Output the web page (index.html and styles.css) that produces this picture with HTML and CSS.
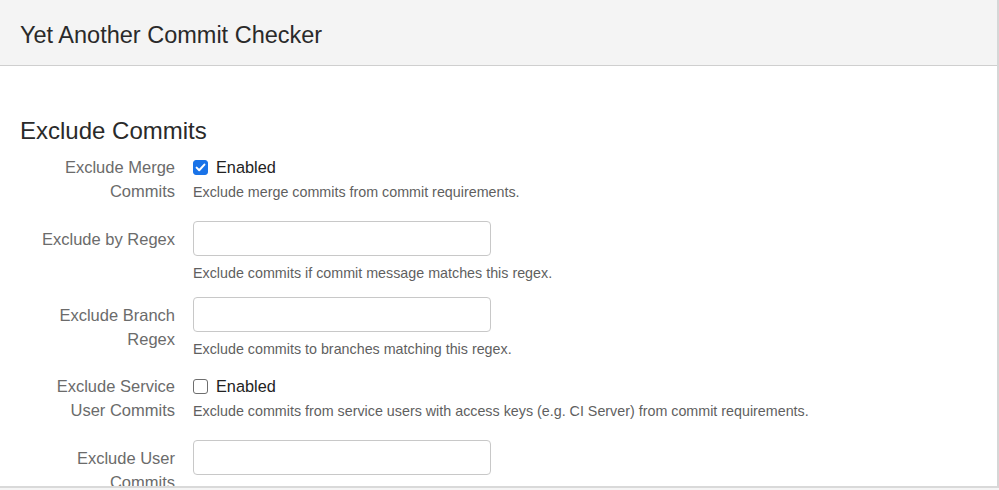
FILE: index.html
```html
<!DOCTYPE html>
<html lang="en">
<head>
<meta charset="utf-8">
<title>Yet Another Commit Checker</title>
<link rel="stylesheet" href="styles.css">
</head>
<body>
<div class="page">
  <header class="header">
    <h1 class="title">Yet Another Commit Checker</h1>
  </header>
  <main class="content">
    <h2 class="section-title">Exclude Commits</h2>

    <div class="field field-check">
      <label class="field-label">Exclude Merge Commits</label>
      <div class="field-body">
        <label class="check">
          <span class="box checked">
            <svg viewBox="0 0 15 15" width="15" height="15"><path d="M3.6 7.6 L6.2 10.2 L11.4 4.6" fill="none" stroke="#fff" stroke-width="2" stroke-linecap="round" stroke-linejoin="round"/></svg>
          </span>
          <span class="check-text">Enabled</span>
        </label>
        <div class="desc">Exclude merge commits from commit requirements.</div>
      </div>
    </div>

    <div class="field field-input">
      <label class="field-label">Exclude by Regex</label>
      <div class="field-body">
        <div class="text-input"></div>
        <div class="desc desc-input">Exclude commits if commit message matches this regex.</div>
      </div>
    </div>

    <div class="field field-input">
      <label class="field-label">Exclude Branch Regex</label>
      <div class="field-body">
        <div class="text-input"></div>
        <div class="desc desc-input">Exclude commits to branches matching this regex.</div>
      </div>
    </div>

    <div class="field field-check field-after-inputs">
      <label class="field-label">Exclude Service User Commits</label>
      <div class="field-body">
        <label class="check">
          <span class="box"></span>
          <span class="check-text">Enabled</span>
        </label>
        <div class="desc">Exclude commits from service users with access keys (e.g. CI Server) from commit requirements.</div>
      </div>
    </div>

    <div class="field field-input">
      <label class="field-label">Exclude User Commits</label>
      <div class="field-body">
        <div class="text-input"></div>
      </div>
    </div>
  </main>
</div>
</body>
</html>
```

FILE: styles.css
```css
* {
  box-sizing: border-box;
}

html, body {
  margin: 0;
  padding: 0;
}

body {
  background: #f5f5f5;
  font-family: "Liberation Sans", Arial, sans-serif;
  color: #333;
  height: 490px;
  overflow: hidden;
}

.page {
  width: 999px;
  height: 488px;
  background: #fff;
  border-right: 2px solid #d6d6d6;
  border-bottom: 2px solid #d9d9d9;
  overflow: hidden;
}

.header {
  height: 66px;
  background: #f4f4f4;
  border-bottom: 1px solid #cfcfcf;
  padding: 21px 0 0 20px;
}

.title {
  margin: 0;
  font-size: 23.5px;
  line-height: 28px;
  font-weight: normal;
  color: #2a2a2a;
}

.content {
  padding: 0 0 0 20px;
}

.section-title {
  margin: 50px 0 9px;
  font-size: 24px;
  line-height: 30px;
  font-weight: normal;
  color: #2a2a2a;
}

.field {
  display: grid;
  grid-template-columns: 155px 1fr;
  column-gap: 18px;
  margin-bottom: 14px;
}

.field-check {
  padding-bottom: 4px;
}

.field-after-inputs {
  margin-top: 15px;
}

.field-label {
  text-align: right;
  font-size: 16.5px;
  line-height: 24px;
  color: #6b6b6b;
}

.field-input .field-label {
  padding-top: 6px;
}

.field-body {
  display: flex;
  flex-direction: column;
  align-items: flex-start;
}

.check {
  display: flex;
  align-items: center;
  height: 24px;
}

.box {
  width: 15px;
  height: 15px;
  border: 1px solid #6e6e6e;
  border-radius: 3px;
  background: #fff;
  margin-right: 8px;
  display: flex;
}

.box.checked {
  background: #1a73e8;
  border-color: #1a73e8;
}

.box svg {
  margin: -1px;
}

.check-text {
  font-size: 16.3px;
  color: #222;
  line-height: 24px;
}

.desc {
  margin-top: 3px;
  font-size: 14.3px;
  line-height: 20px;
  color: #5f5f5f;
  white-space: nowrap;
}

.desc-input {
  margin-top: 7px;
}

.text-input {
  width: 298px;
  height: 35px;
  border: 1px solid #c8c8c8;
  border-radius: 4px;
  background: #fff;
}
```
